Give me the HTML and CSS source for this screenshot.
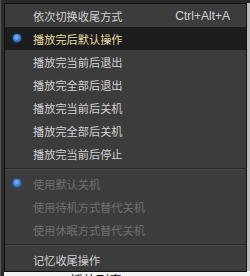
FILE: index.html
```html
<!DOCTYPE html>
<html lang="zh-CN">
<head>
    <meta charset="UTF-8">
    <title>收尾方式菜单</title>
    <link rel="stylesheet" href="styles.css">
</head>
<body>

<div class="stage">
    <div class="side"></div>
    <div class="content">
        <div class="under-text">播放列表</div>
    </div>

    <!-- 右键菜单 -->
    <ul class="menu">
        <li class="item">依次切换收尾方式<span class="shortcut">Ctrl+Alt+A</span></li>
        <li class="item active checked">播放完后默认操作</li>
        <li class="item">播放完当前后退出</li>
        <li class="item">播放完全部后退出</li>
        <li class="item">播放完当前后关机</li>
        <li class="item">播放完全部后关机</li>
        <li class="item">播放完当前后停止</li>
        <li class="sep"></li>
        <li class="item disabled checked">使用默认关机</li>
        <li class="item disabled">使用待机方式替代关机</li>
        <li class="item disabled">使用休眠方式替代关机</li>
        <li class="sep"></li>
        <li class="item">记忆收尾操作</li>
    </ul>
</div>

</body>
</html>
```

FILE: styles.css
```css
body {
    margin: 0;
    font-family: "Noto Sans CJK SC", "Noto Sans", sans-serif;
}
.stage {
    position: relative;
    width: 250px;
    height: 276px;
    overflow: hidden;
    display: flex;
    background: #2a2a2a;
}
.side {
    width: 4px;
    border-left: 1px solid #555;
    box-sizing: border-box;
    background: #2c2c2c;
}
.content {
    flex: 1;
    margin-top: 3px;
    background: #bdbdbd;
    display: flex;
    flex-direction: column;
    justify-content: flex-end;
}
.under-text {
    height: 5px;
    overflow: hidden;
    background: #f2f2f2;
    color: #111;
    font-size: 13px;
    line-height: 18px;
    padding-left: 66px;
}
.menu {
    position: absolute;
    left: 4px;
    top: 3px;
    width: 243px;
    margin: 0;
    padding: 0;
    list-style: none;
    box-sizing: border-box;
    background: #3c3c3c;
    border: 1px solid #111;
}
.item {
    position: relative;
    display: flex;
    align-items: center;
    height: 23px;
    padding: 0 16px 0 28px;
    font-size: 11.2px;
    color: #d2d2d2;
}
.item.active {
    background: #1c1c1c;
    color: #e8dfa2;
}
.item.disabled {
    color: #707070;
}
.item.checked::before {
    content: "";
    position: absolute;
    left: 8px;
    top: 7px;
    width: 8px;
    height: 8px;
    border-radius: 50%;
    background: radial-gradient(circle at 45% 40%, #8fc0ff 0%, #3d86e6 45%, #1f5fb8 100%);
    box-shadow: 0 0 2px #2f6fd0;
}
.shortcut {
    margin-left: auto;
    font-family: "Liberation Sans", sans-serif;
    font-size: 12px;
}
.sep {
    height: 1px;
    margin: 3px 0 2px;
    background: #262626;
    border-bottom: 1px solid #474747;
}
```
